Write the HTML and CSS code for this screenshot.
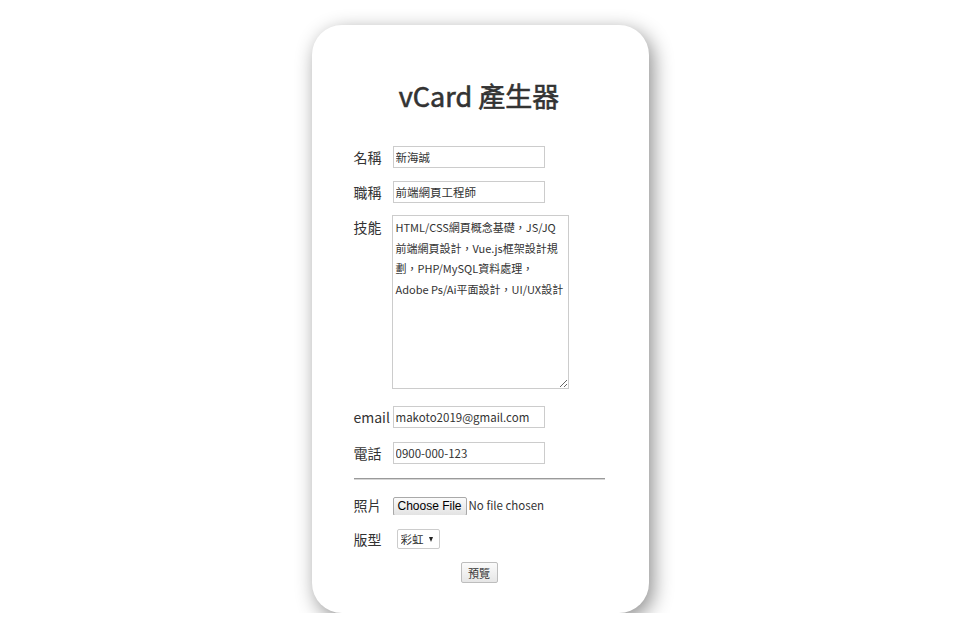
FILE: index.html
```html
<!DOCTYPE html>
<html lang="zh-Hant">
<head>
<meta charset="utf-8">
<title>vCard 產生器</title>
<link rel="stylesheet" href="styles.css">
</head>
<body>
<main class="card">
  <h1 class="title">vCard 產生器</h1>
  <form class="form">
    <div class="row row-name">
      <label class="lbl" for="name">名稱</label>
      <input class="field" id="name" type="text" value="新海誠">
    </div>
    <div class="row row-job">
      <label class="lbl" for="job">職稱</label>
      <input class="field" id="job" type="text" value="前端網頁工程師">
    </div>
    <div class="row row-skill">
      <label class="lbl lbl-top" for="skill">技能</label>
      <textarea class="area" id="skill" wrap="off">HTML/CSS網頁概念基礎，JS/JQ
前端網頁設計，Vue.js框架設計規
劃，PHP/MySQL資料處理，
Adobe Ps/Ai平面設計，UI/UX設計</textarea>
    </div>
    <div class="row row-email">
      <label class="lbl" for="email">email</label>
      <input class="field" id="email" type="text" value="makoto2019@gmail.com">
    </div>
    <div class="row row-tel">
      <label class="lbl" for="tel">電話</label>
      <input class="field" id="tel" type="text" value="0900-000-123">
    </div>
    <hr class="divider">
    <div class="row row-photo">
      <label class="lbl" for="photo">照片</label>
      <input class="file" id="photo" type="file">
    </div>
    <div class="row row-tpl">
      <label class="lbl" for="tpl">版型</label>
      <span class="sel-wrap">
        <select class="sel" id="tpl"><option>彩虹</option></select>
      </span>
    </div>
    <div class="actions">
      <button class="btn" type="button">預覽</button>
    </div>
  </form>
</main>
</body>
</html>
```
FILE: styles.css
```css
html, body {
  margin: 0;
  padding: 0;
  background: #ffffff;
}
body {
  padding-top: 25px;
  font-family: "Noto Sans CJK TC", "Noto Sans", sans-serif;
  color: #333333;
}
.card {
  box-sizing: border-box;
  width: 337px;
  height: 588px;
  margin: 0 auto;
  padding: 51px 44px 0 42px;
  background: #ffffff;
  border-radius: 30px;
  box-shadow: 4px 6px 20px rgba(0, 0, 0, 0.45);
}
.title {
  margin: 0;
  font-size: 27px;
  font-weight: 400;
  line-height: 40px;
  text-align: center;
  color: #333333;
  -webkit-text-stroke: 0.6px #333333;
}
.form {
  display: flex;
  flex-direction: column;
  margin-top: 30px;
}
.row {
  display: flex;
  align-items: center;
}
.row-job { margin-top: 13px; }
.row-skill { margin-top: 12px; align-items: flex-start; }
.row-email { margin-top: 17px; }
.row-tel { margin-top: 14px; }
.row-photo { margin-top: 15px; height: 20px; }
.row-tpl { margin-top: 14px; height: 20px; }
.lbl {
  flex: none;
  width: 39px;
  font-size: 14px;
  line-height: 20px;
  color: #333333;
}
.lbl-top { margin-top: 2px; }
.field {
  box-sizing: border-box;
  width: 152px;
  height: 22px;
  margin: 0;
  padding: 0 2px;
  border: 1px solid #cccccc;
  border-radius: 0;
  font-family: "Noto Sans CJK TC", "Noto Sans", sans-serif;
  font-size: 11.5px;
  color: #333333;
  outline: none;
}
.row-skill .lbl { width: 38px; }
.area {
  box-sizing: border-box;
  width: 177px;
  height: 174px;
  margin: 0;
  padding: 1px 3px;
  border: 1px solid #cccccc;
  font-family: "Noto Sans CJK TC", "Noto Sans", sans-serif;
  font-size: 11px;
  line-height: 20.5px;
  color: #333333;
  white-space: pre;
  overflow: hidden;
  resize: both;
  outline: none;
}
.divider {
  margin: 14px 0 0;
  height: 0;
  border: none;
  border-top: 1px solid #9a9a9a;
  border-bottom: 1px solid #d6d6d6;
}
.file {
  font-family: "Noto Sans CJK TC", "Noto Sans", sans-serif;
  font-size: 11.5px;
  color: #333333;
  height: 20px;
  line-height: 20px;
}
.file::file-selector-button {
  box-sizing: border-box;
  height: 19px;
  margin: 0 2px 0 0;
  padding: 0 4px;
  font-family: "Liberation Sans", Arial, sans-serif;
  font-size: 12px;
  color: #000000;
  border: 1px solid #a9a9a9;
  border-radius: 2px;
  background: linear-gradient(#fbfbfb, #e3e3e3);
}
.sel-wrap {
  position: relative;
  display: inline-block;
  height: 20px;
  margin-left: 4px;
}
.sel-wrap::after {
  content: "";
  position: absolute;
  right: 7px;
  top: 8px;
  width: 0;
  height: 0;
  border-left: 2.5px solid transparent;
  border-right: 2.5px solid transparent;
  border-top: 5px solid #222222;
  pointer-events: none;
}
.sel {
  display: block;
  box-sizing: border-box;
  width: 43px;
  height: 20px;
  margin: 0;
  padding: 0 0 0 3px;
  -webkit-appearance: none;
  appearance: none;
  border: 1px solid #cccccc;
  border-radius: 2px;
  background: #ffffff;
  font-family: "Noto Sans CJK TC", "Noto Sans", sans-serif;
  font-size: 11.5px;
  color: #333333;
  outline: none;
}
.actions {
  display: flex;
  justify-content: center;
  margin-top: 13px;
}
.btn {
  box-sizing: border-box;
  width: 37px;
  height: 21px;
  margin: 0;
  padding: 0;
  font-family: "Noto Sans CJK TC", "Noto Sans", sans-serif;
  font-size: 11px;
  color: #333333;
  border: 1px solid #bdbdbd;
  border-radius: 2px;
  background: linear-gradient(#fbfbfb, #e6e6e6);
}
```
